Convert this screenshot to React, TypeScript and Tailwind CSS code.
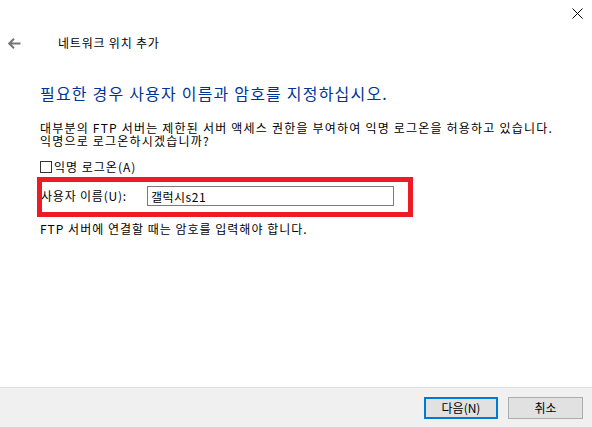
import React, { useState } from 'react';

const font = { fontFamily: '"Noto Sans CJK KR", "Noto Sans", sans-serif' };

const App = () => {
    const [anon, setAnon] = useState(false);
    const [user, setUser] = useState('갤럭시s21');

    return (
        <div className="w-[592px] h-[427px] bg-white flex flex-col text-black overflow-hidden" style={font}>
            {/* title bar */}
            <div className="h-[28px] flex justify-end items-start pt-[8px] pr-[9px]">
                <svg width="11" height="11" viewBox="0 0 11 11" className="text-black">
                    <path d="M0.5 0.5 L10.5 10.5 M10.5 0.5 L0.5 10.5" stroke="currentColor" strokeWidth="1" />
                </svg>
            </div>

            <header className="h-[30px] flex items-center">
                <svg width="13" height="11" viewBox="0 0 13 11" className="ml-[8px] text-[#767676]">
                    <path d="M6 0.8 L1.2 5.5 L6 10.2 M1.2 5.5 L12.5 5.5" stroke="currentColor" strokeWidth="2" fill="none" />
                </svg>
                <h1 className="ml-[37px] text-[12px] leading-[16px] tracking-[0.8px]">네트워크 위치 추가</h1>
            </header>

            <main className="pl-[40px] pr-[10px]">
                <h2 className="mt-[25px] text-[16px] leading-[20px] tracking-[1.2px] text-[#003399]">필요한 경우 사용자 이름과 암호를 지정하십시오.</h2>

                <p className="mt-[18px] text-[12px] leading-[13px] tracking-[1.2px] whitespace-nowrap">
                    대부분의 FTP 서버는 제한된 서버 액세스 권한을 부여하여 익명 로그온을 허용하고 있습니다.
                    <br />
                    익명으로 로그온하시겠습니까?
                </p>

                <label className="mt-[13px] flex items-center h-[13px] text-[12px] leading-[13px] tracking-[1px]">
                    <span
                        onClick={() => setAnon(!anon)}
                        className="w-[12px] h-[12px] border border-[#333] bg-white flex items-center justify-center"
                    >
                        {anon && <span className="w-[6px] h-[6px] bg-[#333]" />}
                    </span>
                    <span className="ml-[2px]">익명 로그온(A)</span>
                </label>

                <div className="relative mt-[13px] flex items-center h-[20px]">
                    <span className="text-[12px] leading-[16px] tracking-[0.8px] w-[106px] ml-[1px]">사용자 이름(U):</span>
                    <input
                        value={user}
                        onChange={(e) => setUser(e.target.value)}
                        className="w-[247px] h-[20px] border border-[#7a7a7a] px-[3px] text-[12px] tracking-[0.5px] outline-none"
                        style={font}
                    />
                    {/* red annotation */}
                    <div className="absolute left-[-3px] top-[-9px] w-[376px] h-[40px] border-[5px] border-[#ed1c24] pointer-events-none" />
                </div>

                <p className="mt-[15px] text-[12px] leading-[16px] tracking-[1px]">FTP 서버에 연결할 때는 암호를 입력해야 합니다.</p>
            </main>

            <div className="flex-1" />

            <footer className="h-[40px] bg-[#f0f0f0] border-t border-[#dfdfdf] flex justify-end items-start pt-[9px] pr-[9px] gap-[10px]">
                <button className="w-[74px] h-[22px] bg-[#e1e1e1] border-2 border-[#0078d7] text-[12px] leading-[16px]">다음(N)</button>
                <button className="w-[75px] h-[22px] bg-[#e1e1e1] border border-[#adadad] text-[12px] leading-[16px]">취소</button>
            </footer>
        </div>
    );
};

export default App;
